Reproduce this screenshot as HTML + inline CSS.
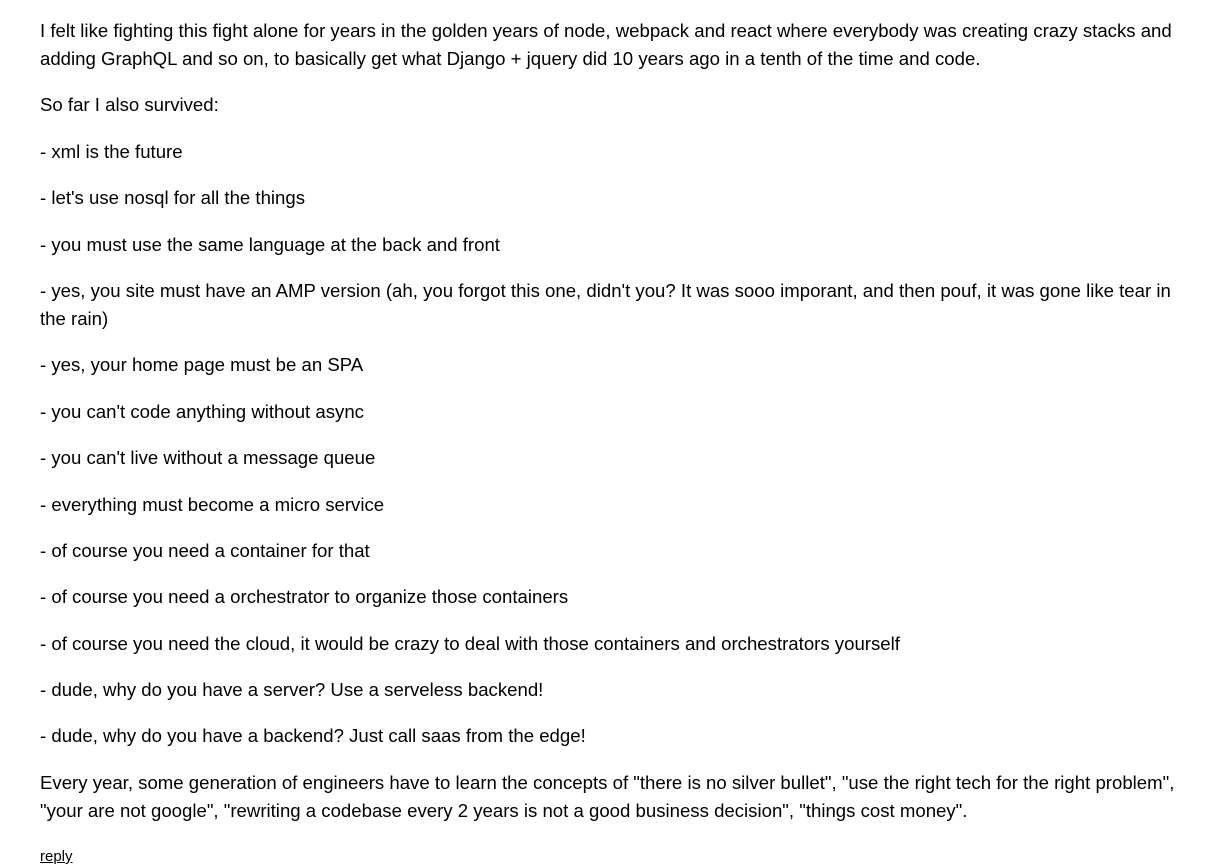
<!DOCTYPE html>
<html><head><meta charset="utf-8"><style>
html,body{margin:0;padding:0;background:#fff;}
body{width:1211px;height:862px;overflow:hidden;font-family:"Liberation Sans",Arial,sans-serif;color:#000;}
.c{position:absolute;left:40px;top:17px;width:1140px;font-size:18.6px;line-height:28px;}
.c p{margin:0 0 18.4px 0;}
.r{font-size:15px;text-decoration:underline;color:#000;position:absolute;left:40px;top:848px;line-height:18px;}
</style></head><body>
<div class="c">
<p>I felt like fighting this fight alone for years in the golden years of node, webpack and react where everybody was creating crazy stacks and adding GraphQL and so on, to basically get what Django + jquery did 10 years ago in a tenth of the time and code.</p>
<p>So far I also survived:</p>
<p>- xml is the future</p>
<p>- let's use nosql for all the things</p>
<p>- you must use the same language at the back and front</p>
<p>- yes, you site must have an AMP version (ah, you forgot this one, didn't you? It was sooo imporant, and then pouf, it was gone like tear in the rain)</p>
<p>- yes, your home page must be an SPA</p>
<p>- you can't code anything without async</p>
<p>- you can't live without a message queue</p>
<p>- everything must become a micro service</p>
<p>- of course you need a container for that</p>
<p>- of course you need a orchestrator to organize those containers</p>
<p>- of course you need the cloud, it would be crazy to deal with those containers and orchestrators yourself</p>
<p>- dude, why do you have a server? Use a serveless backend!</p>
<p>- dude, why do you have a backend? Just call saas from the edge!</p>
<p>Every year, some generation of engineers have to learn the concepts of "there is no silver bullet", "use the right tech for the right problem", "your are not google", "rewriting a codebase every 2 years is not a good business decision", "things cost money".</p>
</div>
<div class="r">reply</div>
</body></html>
